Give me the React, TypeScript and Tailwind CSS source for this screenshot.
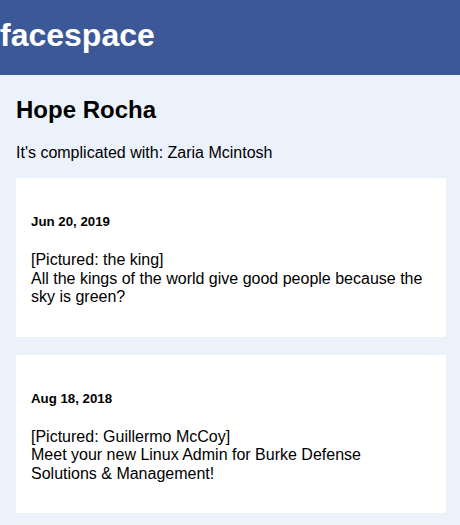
import React from "react";

const posts = [
  {
    date: "Jun 20, 2019",
    pictured: "the king",
    text: "All the kings of the world give good people because the sky is green?",
  },
  {
    date: "Aug 18, 2018",
    pictured: "Guillermo McCoy",
    text: "Meet your new Linux Admin for Burke Defense Solutions & Management!",
  },
];

export default function App() {
  return (
    <div
      className="min-h-[525px] bg-[#ecf2fc] text-black"
      style={{ fontFamily: '"Liberation Sans", Arial, sans-serif' }}
    >
      <header className="h-[75px] bg-[#3b5998] pt-[17px]">
        <h1 className="m-0 text-[32px] leading-[37px] font-bold text-white">facespace</h1>
      </header>
      <main className="pl-4 pr-[14px]">
        <h2 className="mt-[21px] mb-[20px] text-[24px] leading-[27.6px] font-bold">Hope Rocha</h2>
        <p className="mb-4 text-[16px] leading-[18.4px]">It's complicated with: Zaria Mcintosh</p>
        <div className="flex flex-col gap-[18px]">
          {posts.map((p) => (
            <article key={p.date} className="bg-white px-[15px] pt-[36px] pb-[30px]">
              <h5 className="text-[13.28px] leading-[15.3px] font-bold">{p.date}</h5>
              <p className="mt-[22px] text-[16px] leading-[18.4px]">
                [Pictured: {p.pictured}]
                <br />
                {p.text}
              </p>
            </article>
          ))}
        </div>
      </main>
    </div>
  );
}
